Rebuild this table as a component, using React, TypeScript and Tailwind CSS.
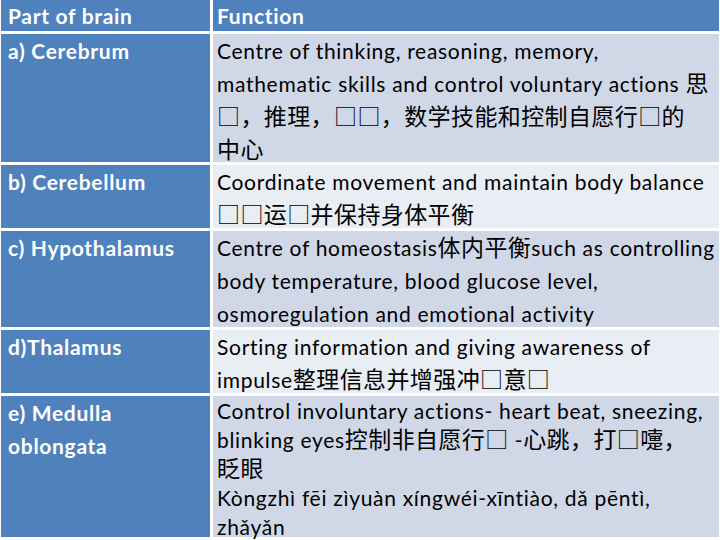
import React from 'react';

const font = { fontFamily: 'Lato, "Noto Sans CJK SC", sans-serif' };
const cjk = { fontFamily: '"Noto Sans CJK SC", sans-serif' };

const rows: { part: string[]; lines: string[]; h: string; bg: string; lh: string }[] = [
  {
    part: ['a) Cerebrum'],
    lines: [
      'Centre of thinking, reasoning, memory,',
      'mathematic skills and control voluntary actions 思',
      '□，推理，□□，数学技能和控制自愿行□的',
      '中心',
    ],
    h: 'h-[128px]',
    bg: 'bg-[#d0d8e8]',
    lh: 'leading-[33px]',
  },
  {
    part: ['b) Cerebellum'],
    lines: ['Coordinate movement and maintain body balance', '□□运□并保持身体平衡'],
    h: 'h-[63px]',
    bg: 'bg-[#e9edf4]',
    lh: 'leading-[33px]',
  },
  {
    part: ['c) Hypothalamus'],
    lines: [
      'Centre of homeostasis体内平衡such as controlling',
      'body temperature, blood glucose level,',
      'osmoregulation and emotional activity',
    ],
    h: 'h-[96px]',
    bg: 'bg-[#d0d8e8]',
    lh: 'leading-[33px]',
  },
  {
    part: ['d)Thalamus'],
    lines: ['Sorting information and giving awareness of', 'impulse整理信息并增强冲□意□'],
    h: 'h-[63px]',
    bg: 'bg-[#e9edf4]',
    lh: 'leading-[33px]',
  },
  {
    part: ['e) Medulla', 'oblongata'],
    lines: [
      'Control involuntary actions- heart beat, sneezing,',
      'blinking eyes控制非自愿行□ -心跳，打□嚏，',
      '眨眼',
      'Kòngzhì fēi zìyuàn xíngwéi-xīntiào, dǎ pēntì,',
      'zhǎyǎn',
    ],
    h: 'h-[141px]',
    bg: 'bg-[#d0d8e8]',
    lh: 'leading-[29px]',
  },
];

// Chinese runs (and the missing-glyph boxes) are set a bit larger, as in the source
const Line = ({ text }: { text: string }) => (
  <div className="whitespace-nowrap">
    {text.split(/([\u3000-\u9fff\uff00-\uffef□]+)/).map((s, k) =>
      /[\u3000-\u9fff\uff00-\uffef□]/.test(s) ? (
        <span key={k} className="text-[23px] tracking-[0.4px] leading-none" style={cjk}>{s}</span>
      ) : (
        <React.Fragment key={k}>{s}</React.Fragment>
      )
    )}
  </div>
);

export default function App() {
  return (
    <div className="w-[720px] h-[540px] bg-white pl-[1px] pr-[3px]" style={font}>
      <div className="grid grid-cols-[209px_1fr] gap-[3px] text-[21px] tracking-[0.7px]">
        <div className="h-[31px] bg-[#4f81bd] text-white font-bold px-[7px] leading-[31px]">Part of brain</div>
        <div className="h-[31px] bg-[#4f81bd] text-white font-bold px-[4px] leading-[31px]">Function</div>
        {rows.map((r, i) => (
          <React.Fragment key={i}>
            <div className={`${r.h} bg-[#4f81bd] text-white font-bold px-[7px] leading-[33px]`}>
              {r.part.map((p, j) => (
                <div key={j} className="whitespace-nowrap">{p}</div>
              ))}
            </div>
            <div className={`${r.h} ${r.bg} text-black px-[4px] ${r.lh}`}>
              {r.lines.map((l, j) => (
                <Line key={j} text={l} />
              ))}
            </div>
          </React.Fragment>
        ))}
      </div>
    </div>
  );
}
